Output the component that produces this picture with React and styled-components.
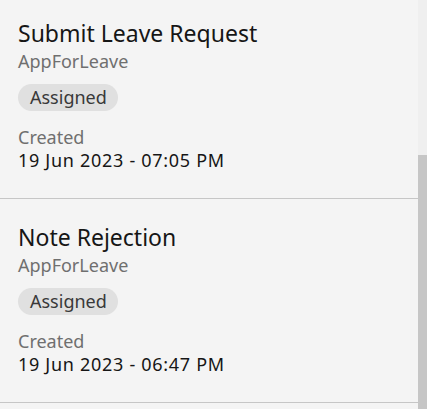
import React from "react";
import styled, { createGlobalStyle } from "styled-components";

const Global = createGlobalStyle`
  html, body { margin: 0; padding: 0; background: #f4f4f4; }
  body { font-family: "Noto Sans", "Open Sans", sans-serif; color: #161616; }
`;

const Viewport = styled.div`
  height: 409px;
  width: 427px;
  display: flex;
  overflow: hidden;
  background: #f4f4f4;
`;

const List = styled.ul`
  flex: 1;
  list-style: none;
  margin: -5px 0 0;
  padding: 0;
`;

const Card = styled.li`
  padding: 24px 18px 0;
  height: 204px;
  box-sizing: border-box;
  border-bottom: 1px solid #c6c6c6;
  display: flex;
  flex-direction: column;
  align-items: flex-start;
`;

const Title = styled.h3`
  margin: 0;
  font-size: 23px;
  line-height: 28px;
  font-weight: 400;
  color: #161616;
`;

const AppName = styled.div`
  margin-top: 3px;
  font-size: 18px;
  line-height: 22px;
  color: #6f6f6f;
`;

const Tag = styled.span`
  margin-top: 12px;
  height: 27px;
  padding: 0 11px 0 12px;
  border-radius: 14px;
  background: #e0e0e0;
  color: #393939;
  font-size: 18px;
  line-height: 27px;
  display: inline-flex;
  align-items: center;
`;

const Label = styled.div`
  margin-top: 15px;
  font-size: 18px;
  line-height: 22px;
  color: #6f6f6f;
`;

const Value = styled.div`
  margin-top: 1px;
  font-size: 18px;
  line-height: 22px;
  letter-spacing: 0.7px;
  color: #161616;
`;

const Track = styled.div`
  width: 9px;
  flex-shrink: 0;
  display: flex;
  flex-direction: column;
  background: #efefef;
`;

const Thumb = styled.div`
  margin-top: ${(p) => p.$offset}px;
  flex: 1;
  background: #c6c6c6;
`;

const tasks = [
  { title: "Submit Leave Request", app: "AppForLeave", status: "Assigned", created: "19 Jun 2023 - 07:05 PM" },
  { title: "Note Rejection", app: "AppForLeave", status: "Assigned", created: "19 Jun 2023 - 06:47 PM" },
];

export default function App() {
  return (
    <>
      <Global />
      <Viewport>
        <List>
          {tasks.map((t) => (
            <Card key={t.title}>
              <Title>{t.title}</Title>
              <AppName>{t.app}</AppName>
              <Tag>{t.status}</Tag>
              <Label>Created</Label>
              <Value>{t.created}</Value>
            </Card>
          ))}
        </List>
        <Track aria-hidden="true">
          <Thumb $offset={155} />
        </Track>
      </Viewport>
    </>
  );
}
